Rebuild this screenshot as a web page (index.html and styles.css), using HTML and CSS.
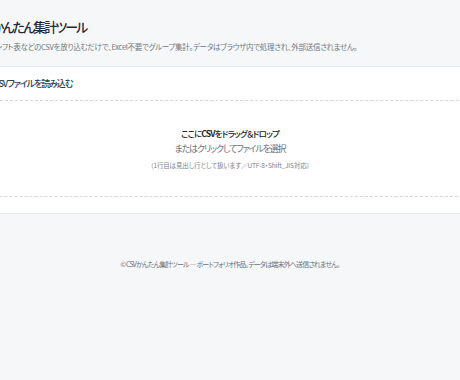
FILE: index.html
```html
<!DOCTYPE html>
<html lang="ja">
<head>
<meta charset="utf-8">
<title>CSVかんたん集計ツール</title>
<link rel="stylesheet" href="styles.css">
</head>
<body>

<div class="page">
  <header class="header">
    <h1>CSVかんたん集計ツール</h1>
    <p class="lead">勤怠やシフト表などのCSVを放り込むだけで、Excel不要でグループ集計。データはブラウザ内で処理され、外部送信されません。</p>
  </header>

  <section class="card">
    <h2>CSVファイルを読み込む</h2>
    <label class="dropzone" for="file">
      <span class="drop-main">ここに<b>CSV</b>をドラッグ＆ドロップ</span>
      <span class="drop-sub">またはクリックしてファイルを選択</span>
      <span class="drop-hint">（1行目は見出し行として扱います／UTF-8・Shift_JIS対応）</span>
      <input type="file" id="file" accept=".csv">
    </label>
  </section>

  <footer class="footer">© CSVかんたん集計ツール — ポートフォリオ作品。データは端末外へ送信されません。</footer>
</div>

</body>
</html>
```

FILE: styles.css
```css
html, body {
  margin: 0;
  padding: 0;
}

body {
  font-family: "Noto Sans CJK JP", "Noto Sans", sans-serif;
  font-feature-settings: "palt";
  background-color: #f6f7f9;
  color: #1f2937;
  display: flex;
  justify-content: center;
  min-height: 100vh;
}

.page {
  width: 512px;
  flex-shrink: 0;
}

.header {
  padding-top: 17px;
  height: 49px;
}

.header h1 {
  margin: 0;
  font-size: 13px;
  font-weight: 500;
  line-height: 20px;
  letter-spacing: -0.15em;
}

.lead {
  margin: 3px 0 0;
  font-size: 7.5px;
  line-height: 14px;
  color: #6f7782;
  letter-spacing: -0.04em;
}

.card {
  background-color: #fff;
  border: 1px solid #e5e8ec;
  padding: 9px 19px 16px;
}

.card h2 {
  margin: 0 0 8px;
  font-size: 9px;
  font-weight: 500;
  line-height: 16px;
  color: #274056;
  letter-spacing: -0.12em;
}

.dropzone {
  display: flex;
  flex-direction: column;
  align-items: center;
  height: 97px;
  border: 1px dashed #d3d7dc;
  border-radius: 6px;
  box-sizing: border-box;
  padding-top: 24px;
  cursor: pointer;
}

.dropzone input {
  display: none;
}

.drop-main {
  font-size: 8.5px;
  font-weight: 500;
  line-height: 16px;
  color: #222;
  letter-spacing: -0.1em;
}

.drop-main b {
  font-weight: 700;
}

.drop-sub {
  font-size: 9px;
  line-height: 16px;
  color: #6b7280;
  letter-spacing: -0.13em;
}

.drop-hint {
  margin-top: 1px;
  font-size: 6.5px;
  line-height: 14px;
  color: #7b8491;
  letter-spacing: -0.02em;
}

.footer {
  margin-top: 43px;
  text-align: center;
  font-size: 7px;
  line-height: 14px;
  color: #6b7280;
  letter-spacing: -0.12em;
}
```
